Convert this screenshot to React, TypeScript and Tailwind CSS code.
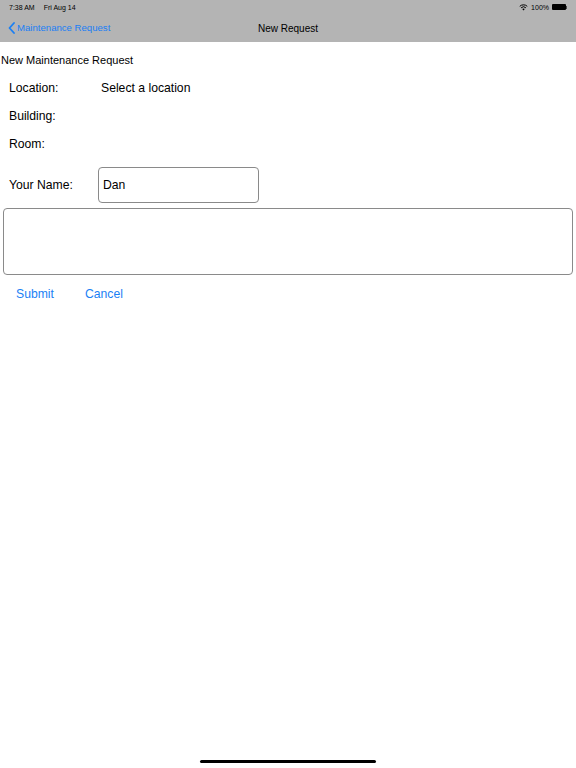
export default function App() {
  return (
    <div className="relative w-[576px] h-[768px] bg-white overflow-hidden font-['Liberation_Sans',Arial,sans-serif] text-black">
      {/* Status + nav bar */}
      <div className="h-[42px] bg-[#b4b4b4] flex flex-col">
        <div className="h-[14px] flex items-center justify-between px-[9px] text-[7px] leading-none">
          <div className="flex gap-[9px]">
            <span>7:38 AM</span>
            <span>Fri Aug 14</span>
          </div>
          <div className="flex items-center gap-[3px]">
            <svg width="9" height="7" viewBox="0 0 18 14">
              <path d="M9 13 L11.5 10 A4 4 0 0 0 6.5 10 Z" fill="#000" />
              <path d="M4.2 7.6 A7 7 0 0 1 13.8 7.6" stroke="#000" strokeWidth="2" fill="none" />
              <path d="M1.5 4.6 A11 11 0 0 1 16.5 4.6" stroke="#000" strokeWidth="2" fill="none" />
            </svg>
            <span>100%</span>
            <div className="flex items-center">
              <div className="w-[14px] h-[6px] bg-black rounded-[1px]" />
              <div className="w-[1px] h-[3px] bg-black/60" />
            </div>
          </div>
        </div>
        <div className="relative flex-1 flex items-center">
          <div className="flex items-center gap-[2px] pl-[8px] text-[#1a7ff5] text-[9.6px]">
            <svg width="7" height="12" viewBox="0 0 7 12">
              <path d="M6 1 L1.5 6 L6 11" stroke="#1a7ff5" strokeWidth="1.8" fill="none" strokeLinecap="round" strokeLinejoin="round" />
            </svg>
            <span>Maintenance Request</span>
          </div>
          <div className="absolute inset-0 flex items-center justify-center text-[10px]">
            New Request
          </div>
        </div>
      </div>

      {/* Form */}
      <div className="flex flex-col">
        <div className="pl-[1px] pt-[11px] text-[11px] leading-[14px]">New Maintenance Request</div>
        <div className="flex flex-col gap-[11px] pl-[9px] pt-[13px] text-[12.2px] leading-[17px]">
          <div className="flex">
            <span className="w-[92px]">Location:</span>
            <span>Select a location</span>
          </div>
          <div>Building:</div>
          <div>Room:</div>
        </div>
        <div className="flex items-center pl-[9px] pt-[14px] text-[12.2px]">
          <span className="w-[89px]">Your Name:</span>
          <div className="w-[161px] h-[36px] border border-[#8a8a8a] rounded-[4px] flex items-center pl-[4px]">
            Dan
          </div>
        </div>
        <div className="mx-[3px] mt-[5px] h-[67px] border border-[#8a8a8a] rounded-[4px]" />
        <div className="flex gap-[31px] pl-[16px] pt-[10px] text-[12.2px] text-[#1a7ff5]">
          <span>Submit</span>
          <span>Cancel</span>
        </div>
      </div>

      {/* Home indicator */}
      <div className="absolute left-[200px] bottom-[5px] w-[176px] h-[3px] rounded-full bg-black" />
    </div>
  );
}
